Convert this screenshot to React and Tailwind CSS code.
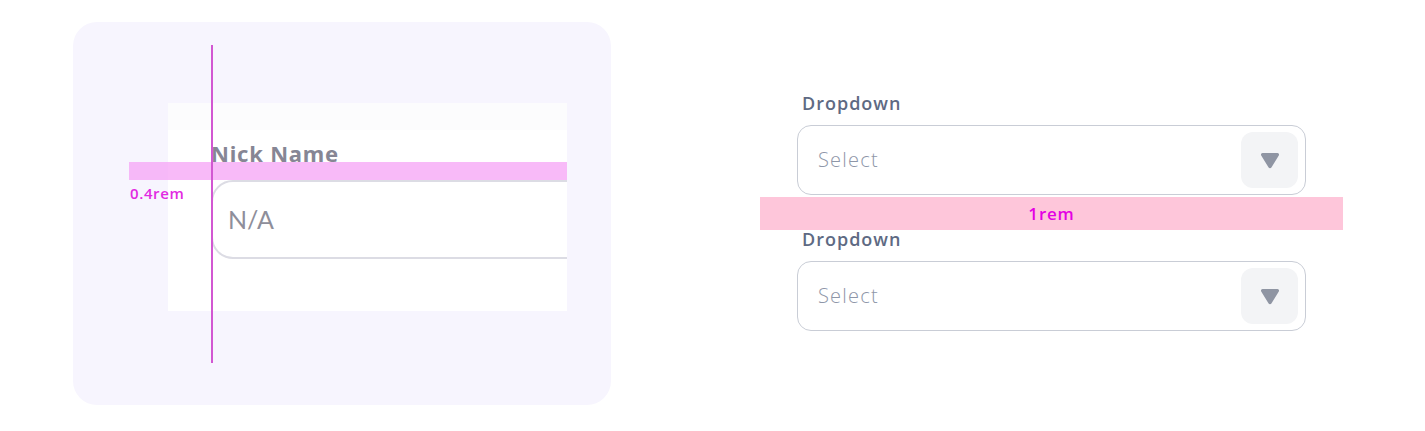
import React from 'react';

function Caret() {
  return (
    <svg width="20" height="17" viewBox="0 0 20 17" fill="#8f95a3">
      <path d="M2.6 1h14.8a1.6 1.6 0 0 1 1.4 2.4l-7.4 12.1a1.6 1.6 0 0 1-2.8 0L1.2 3.4A1.6 1.6 0 0 1 2.6 1z" />
    </svg>
  );
}

function Dropdown({ className = '' }) {
  return (
    <div className={`flex flex-col ${className}`}>
      <span className="pl-[5px] text-[18px] leading-[22px] font-semibold tracking-[1px] text-[#5e6a83]">
        Dropdown
      </span>
      <div className="mt-[11px] h-[70px] w-[509px] border border-[#c9cdd6] rounded-[14px] flex items-center justify-between pl-[20px] pr-[7px] bg-white">
        <span className="text-[20px] font-light tracking-[1.2px] text-[#8e96a8]">Select</span>
        <div className="w-[57px] h-[56px] rounded-[12px] bg-[#f3f4f6] flex items-center justify-center">
          <Caret />
        </div>
      </div>
    </div>
  );
}

export default function App() {
  return (
    <div
      className="w-[1425px] h-[431px] bg-white flex items-start pt-[22px] pl-[73px]"
      style={{ fontFamily: '"Open Sans", sans-serif' }}
    >
      {/* Annotated screenshot card */}
      <div className="relative shrink-0 w-[538px] h-[383px] rounded-[24px] bg-[#f7f5fe] pt-[81px] pl-[95px]">
        <div className="w-[399px] h-[208px] bg-white overflow-hidden flex flex-col">
          <div className="h-[27px] bg-[#fcfcfd]" />
          <div className="flex flex-col pl-[43px]">
            <span
              className="mt-[8px] text-[22px] leading-[30px] font-bold tracking-[0.8px] text-[#868694] whitespace-nowrap"
              style={{ fontFamily: '"Noto Sans", sans-serif' }}
            >
              Nick Name
            </span>
            <div className="mt-[12px] h-[79px] w-[420px] shrink-0 border-2 border-[#dcdce4] rounded-[22px] flex items-center pl-[15px]">
              <span
                className="text-[25px] text-[#8e8e9a]"
                style={{ fontFamily: 'Lato, sans-serif' }}
              >
                N/A
              </span>
            </div>
          </div>
        </div>

        {/* spacing annotation */}
        <div className="absolute left-[56px] top-[140px] w-[438px] h-[18px] bg-[#f5a3f5]/75" />
        <div className="absolute left-[138px] top-[23px] w-[1.5px] h-[318px] bg-[#d257d2]" />
        <span className="absolute left-[57px] top-[161px] text-[15px] leading-[20px] font-semibold tracking-[0.6px] text-[#e22ae2]">
          0.4rem
        </span>
      </div>

      {/* Dropdown stack */}
      <div className="relative ml-[186px] mt-[70px] flex flex-col">
        <Dropdown />
        <Dropdown className="mt-[33px]" />
        <div className="absolute left-[-37px] top-[105px] w-[583px] h-[33px] bg-[#fec6da] flex items-center justify-center">
          <span className="text-[17px] font-semibold tracking-[0.8px] text-[#e400e4]">1rem</span>
        </div>
      </div>
    </div>
  );
}
